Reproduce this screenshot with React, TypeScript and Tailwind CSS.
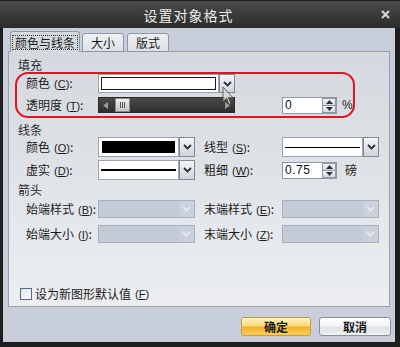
import React from "react";

function Chevron({ color = "#2a2f36" }: { color?: string }) {
  return (
    <svg width="9" height="6" viewBox="0 0 9 6">
      <polyline points="1,1 4.5,4.5 8,1" fill="none" stroke={color} strokeWidth="1.8" />
    </svg>
  );
}

function DropBtn() {
  return (
    <div className="w-[16px] h-full flex items-center justify-center border border-[#7f8893] bg-gradient-to-b from-[#f4f6f8] to-[#cfd5dd]">
      <Chevron />
    </div>
  );
}

function DisabledCombo() {
  return (
    <div className="w-[97px] h-full flex border border-[#a9b1bd] bg-[#c4cbd7]">
      <div className="flex-1" />
      <div className="w-[15px] h-full flex items-center justify-center bg-[#cbd1dc]">
        <Chevron color="#e6e9ee" />
      </div>
    </div>
  );
}

function Spin({ v }: { v: string }) {
  return (
    <div className="w-[55px] h-[17px] flex border border-[#8e97a3] bg-white">
      <div className="flex-1 pl-[2px] text-[12px] leading-[15px] font-['Liberation_Sans',sans-serif] tracking-[0.5px] text-[#111]">
        {v}
      </div>
      <div className="w-[14px] flex flex-col">
        <div className="flex-1 flex items-center justify-center border border-[#8f98a4] bg-gradient-to-b from-[#f3f5f7] to-[#d4d9e0]">
          <svg width="7" height="4" viewBox="0 0 7 4">
            <polygon points="0,4 3.5,0 7,4" fill="#2d3238" />
          </svg>
        </div>
        <div className="flex-1 flex items-center justify-center border border-t-0 border-[#8f98a4] bg-gradient-to-b from-[#f3f5f7] to-[#d4d9e0]">
          <svg width="7" height="4" viewBox="0 0 7 4">
            <polygon points="0,0 3.5,4 7,0" fill="#2d3238" />
          </svg>
        </div>
      </div>
    </div>
  );
}

function Lbl({ t, k, cls }: { t: string; k: string; cls: string }) {
  return (
    <div className={cls + " text-[12px] leading-none text-[#1b1b1b] whitespace-nowrap"}>
      {t}
      <span className="ml-[4px] font-['Liberation_Sans',sans-serif] text-[11px]">
        (<span className="underline">{k}</span>)
      </span>
      :
    </div>
  );
}

export default function App() {
  return (
    <div className="relative w-[400px] h-[347px] bg-[#1e1e1e] flex flex-col font-['Noto_Sans_CJK_SC',sans-serif] text-[#1b1b1b] select-none overflow-hidden">
      {/* Title bar */}
      <div className="h-[28px] flex items-center bg-gradient-to-b from-[#4b4b4b] via-[#3b3b3b] to-[#2c2c2c] border-t border-[#1a1a1a]">
        <div className="flex-1 text-center text-[14px] leading-none text-[#ededed] tracking-[1px]">设置对象格式</div>
        <div className="w-[16px] mr-[7px] flex items-center justify-center">
          <svg width="9" height="9" viewBox="0 0 9 9">
            <path d="M1 1 L8 8 M8 1 L1 8" stroke="#d4d4d4" strokeWidth="2.2" />
          </svg>
        </div>
      </div>

      {/* Body */}
      <div className="flex-1 ml-[3px] mr-[5px] mb-[5px] bg-[#c8cfda] flex flex-col pt-[3px]">
        {/* Tabs */}
        <div className="relative z-10 flex items-end h-[21px] -mb-[1px] pl-[7px]">
          <div className="w-[70px] h-[21px] flex items-center justify-center border border-b-0 border-[#8e98a5] rounded-t-[3px] bg-[#d4d9df]">
            <span className="border border-dotted border-[#333] px-[2px] text-[12px] leading-[13px]">颜色与线条</span>
          </div>
          <div className="ml-[2px] w-[42px] h-[19px] flex items-center justify-center border border-[#8e98a5] rounded-t-[3px] bg-gradient-to-b from-[#eef0f3] to-[#dde1e6] text-[12px] leading-none">
            大小
          </div>
          <div className="ml-[3px] w-[42px] h-[19px] flex items-center justify-center border border-[#8e98a5] rounded-t-[3px] bg-gradient-to-b from-[#eef0f3] to-[#dde1e6] text-[12px] leading-none">
            版式
          </div>
        </div>

        {/* Panel */}
        <div className="ml-[5px] w-[382px] h-[256px] border border-[#98a1ad] bg-gradient-to-b from-[#d4d9df] to-[#eceef1] flex flex-col">
          {/* 填充 */}
          <div className="mt-[6px] h-[14px] pl-[9px] text-[12px] leading-[14px] text-[#2a2a2a]">填充</div>
          <div className="ml-[6px] w-[340px] h-[46px] border-2 border-[#e3141b] rounded-[13px] pl-[9px] flex flex-col">
            <div className="h-[19px] flex items-center">
              <Lbl t="颜色" k="C" cls="w-[72px]" />
              <div className="w-[121px] h-[19px] border border-[#9aa3ae] bg-white p-[2px]">
                <div className="w-full h-full border border-[#1a1a1a] bg-white" />
              </div>
              <DropBtn />
            </div>
            <div className="mt-[4px] h-[16px] flex items-center">
              <Lbl t="透明度" k="T" cls="w-[72px]" />
              <div className="w-[137px] h-[16px] flex items-center bg-gradient-to-b from-[#4a4a4a] to-[#2e2e2e] border border-[#2a2a2a]">
                <svg className="ml-[4px]" width="5" height="7" viewBox="0 0 5 7">
                  <polygon points="5,0 0,3.5 5,7" fill="#9a9a9a" />
                </svg>
                <div className="ml-[7px] w-[15px] h-[14px] bg-gradient-to-b from-[#f0f0f0] to-[#c4c4c4] border border-[#888] flex items-center justify-center gap-[1px]">
                  <div className="w-[1px] h-[6px] bg-[#555]" />
                  <div className="w-[1px] h-[6px] bg-[#555]" />
                  <div className="w-[1px] h-[6px] bg-[#555]" />
                </div>
                <div className="flex-1" />
                <svg className="mr-[4px]" width="5" height="7" viewBox="0 0 5 7">
                  <polygon points="0,0 5,3.5 0,7" fill="#9a9a9a" />
                </svg>
              </div>
              <div className="ml-[47px]">
                <Spin v="0" />
              </div>
              <div className="ml-[5px] text-[12px] leading-none font-['Liberation_Sans',sans-serif]">%</div>
            </div>
          </div>

          {/* 线条 */}
          <div className="mt-[5px] h-[14px] pl-[9px] text-[12px] leading-[14px] text-[#2a2a2a]">线条</div>
          <div className="h-[20px] pl-[17px] flex items-center">
            <Lbl t="颜色" k="O" cls="w-[72px]" />
            <div className="w-[81px] h-[20px] border border-[#9aa3ae] bg-white p-[3px]">
              <div className="w-full h-full bg-black" />
            </div>
            <DropBtn />
            <Lbl t="线型" k="S" cls="ml-[9px] w-[78px]" />
            <div className="w-[81px] h-[20px] border border-[#9aa3ae] bg-white flex items-center px-[2px]">
              <div className="w-full h-[1px] bg-black" />
            </div>
            <DropBtn />
          </div>
          <div className="mt-[3px] h-[20px] pl-[17px] flex items-center">
            <Lbl t="虚实" k="D" cls="w-[72px]" />
            <div className="w-[81px] h-[20px] border border-[#9aa3ae] bg-white flex items-center px-[2px]">
              <div className="w-full h-[2px] bg-black" />
            </div>
            <DropBtn />
            <Lbl t="粗细" k="W" cls="ml-[9px] w-[78px]" />
            <Spin v="0.75" />
            <div className="ml-[8px] text-[12px] leading-none">磅</div>
          </div>

          {/* 箭头 */}
          <div className="mt-[3px] h-[14px] pl-[9px] text-[12px] leading-[14px] text-[#2a2a2a]">箭头</div>
          <div className="mt-[3px] h-[18px] pl-[17px] flex items-center">
            <Lbl t="始端样式" k="B" cls="w-[72px]" />
            <DisabledCombo />
            <Lbl t="末端样式" k="E" cls="ml-[9px] w-[78px]" />
            <DisabledCombo />
          </div>
          <div className="mt-[7px] h-[18px] pl-[17px] flex items-center">
            <Lbl t="始端大小" k="I" cls="w-[72px]" />
            <DisabledCombo />
            <Lbl t="末端大小" k="Z" cls="ml-[9px] w-[78px]" />
            <DisabledCombo />
          </div>

          {/* checkbox */}
          <div className="mt-[45px] h-[12px] pl-[11px] flex items-center">
            <div className="w-[12px] h-[12px] border border-[#4f6a8c] bg-gradient-to-br from-[#dfe4ea] to-white" />
            <div className="ml-[3px] flex items-center text-[12px] leading-none">
              设为新图形默认值
              <span className="ml-[4px] font-['Liberation_Sans',sans-serif] text-[11px]">
                (<span className="underline">F</span>)
              </span>
            </div>
          </div>
        </div>

        {/* Buttons */}
        <div className="mt-[10px] h-[19px] flex justify-end gap-[8px] pr-[4px]">
          <div className="w-[70px] h-[19px] flex items-center justify-center rounded-[3px] border border-[#c49a45] bg-[linear-gradient(to_bottom,#fff2c6_0%,#fcd978_45%,#f5b226_55%,#f9cf63_100%)] text-[12px] font-bold leading-none text-[#1a1a1a]">
            确定
          </div>
          <div className="w-[72px] h-[19px] flex items-center justify-center rounded-[3px] border border-[#8a9199] bg-[linear-gradient(to_bottom,#ffffff_0%,#f3f4f6_45%,#dfe2e7_55%,#eef0f3_100%)] text-[12px] font-bold leading-none text-[#1a1a1a]">
            取消
          </div>
        </div>
      </div>

      {/* Mouse cursor */}
      <svg className="absolute left-[222px] top-[86px]" width="12" height="20" viewBox="0 0 12 20">
        <path d="M1 1 L1 16 L4.5 12.5 L7 18.5 L9 17.5 L6.5 11.8 L11 11.8 Z" fill="#d8d8d8" stroke="#4a4a4a" strokeWidth="1" strokeLinejoin="round" opacity="0.85" />
      </svg>
    </div>
  );
}
